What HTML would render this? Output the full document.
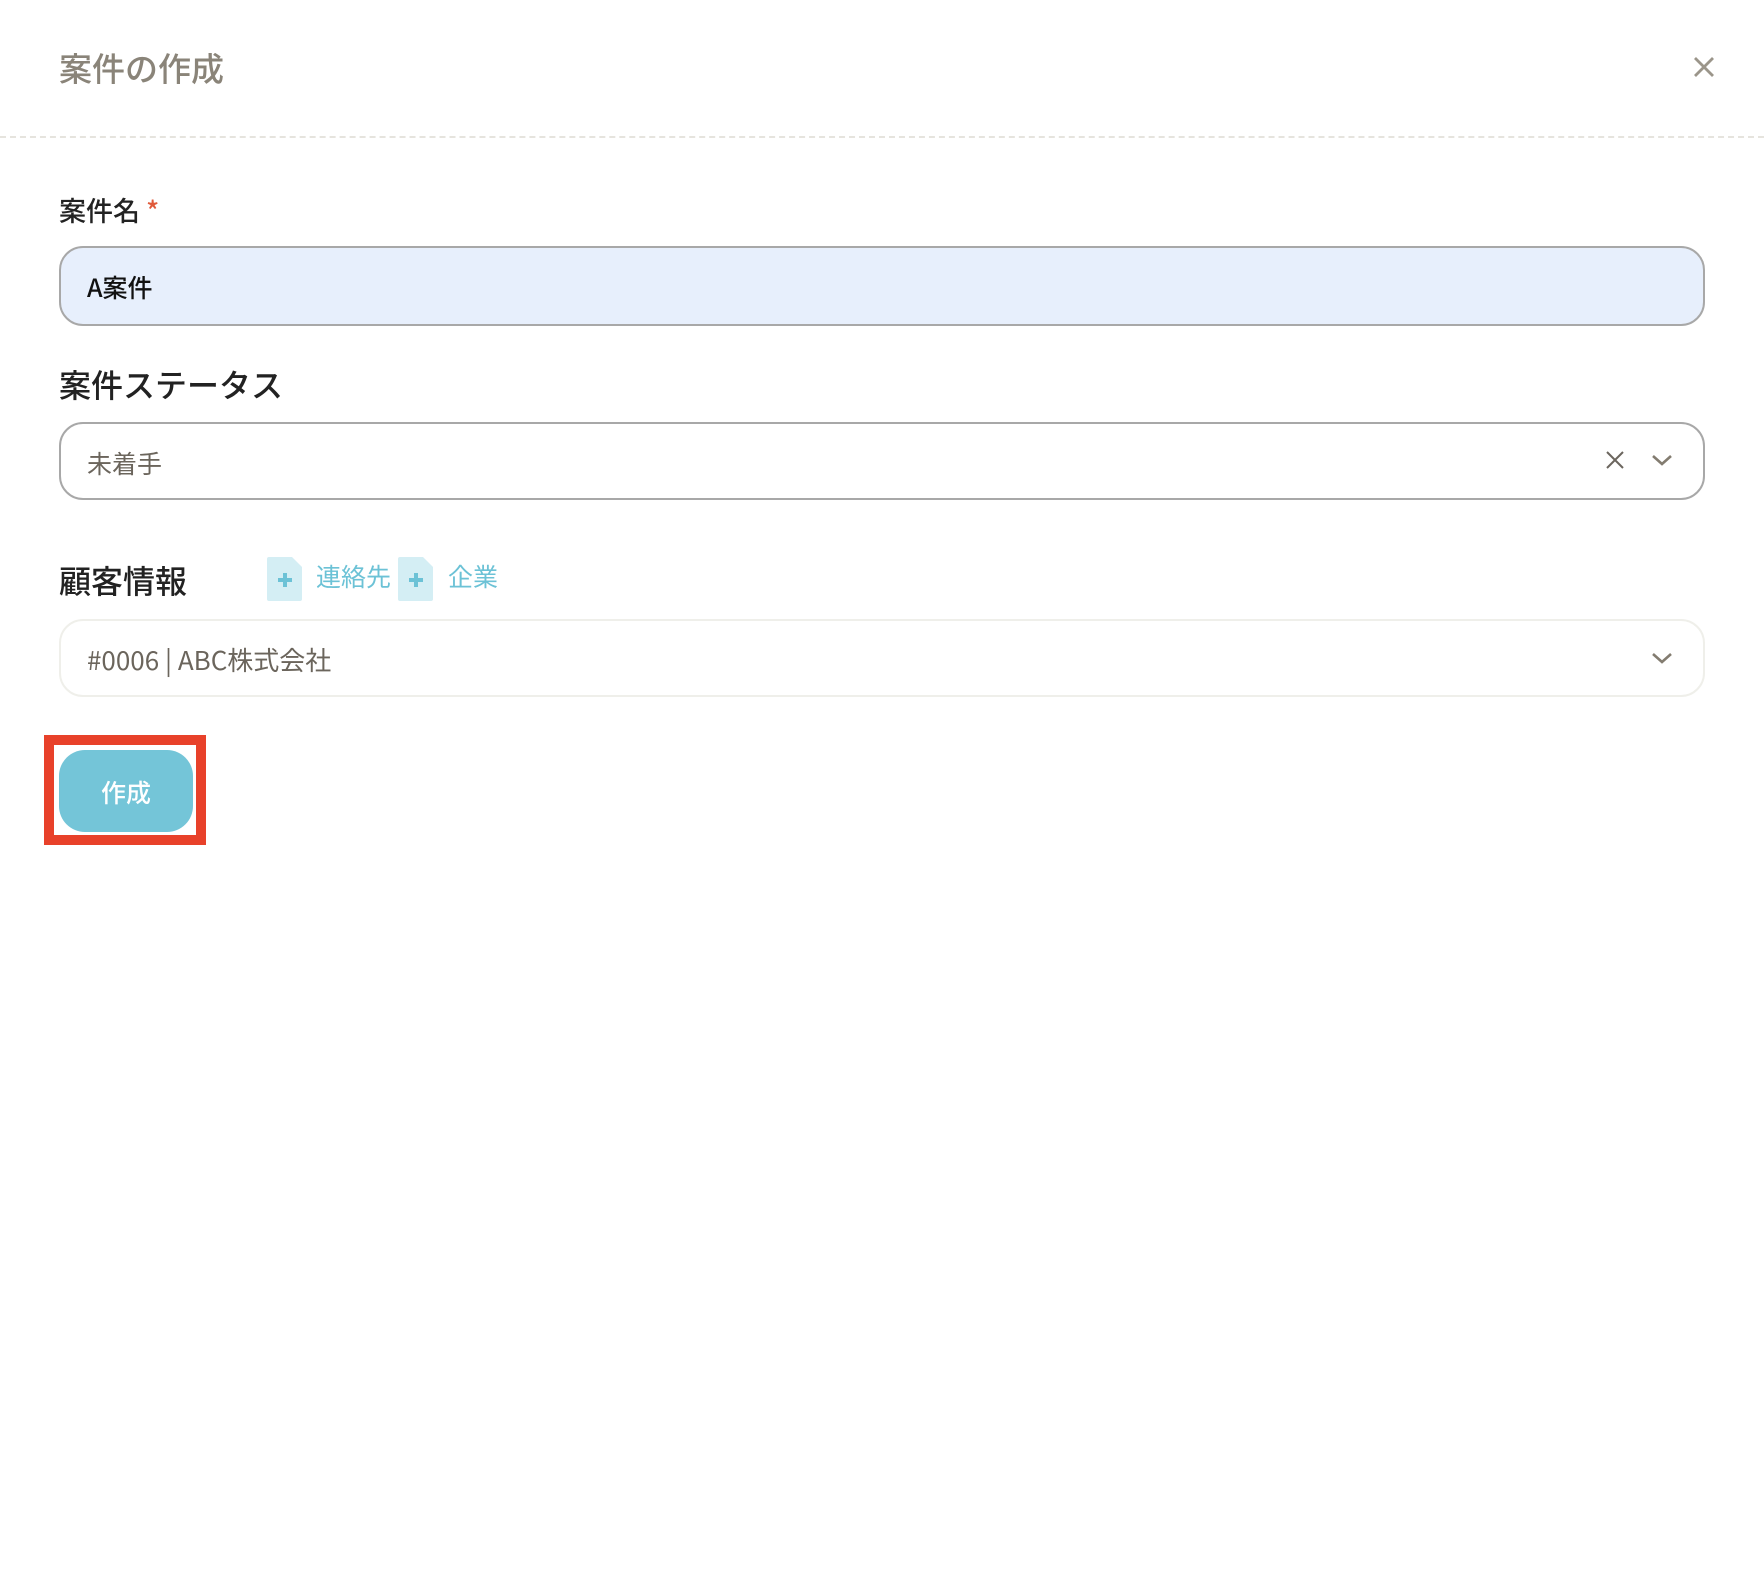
<!DOCTYPE html>
<html><head><meta charset="utf-8"><style>
*{margin:0;padding:0;box-sizing:border-box}
body{width:1764px;height:1592px;background:#fff;font-family:"Liberation Sans","Noto Sans CJK JP",sans-serif;position:relative;overflow:hidden}
.a{position:absolute;white-space:nowrap}
.title{left:59px;top:45px;font-size:33px;line-height:44px;color:#8a8479;font-family:"Noto Sans CJK JP",sans-serif;font-weight:500}
.dash{left:0;top:136px;width:1764px;border-top:2px dashed #e6e4de}
.lbl{font-family:"Noto Sans CJK JP",sans-serif;color:#222}
.box{position:absolute;left:59px;width:1646px;border-radius:24px}
.txt{font-family:"Noto Sans CJK JP",sans-serif}
</style></head><body>
<div class="a title">案件の作成</div>
<svg class="a" style="left:1693px;top:56px" width="22" height="22" viewBox="0 0 22 22"><path d="M2 2L20 20M20 2L2 20" stroke="#9b958a" stroke-width="2.8"/></svg>
<div class="a dash"></div>

<div class="a lbl" style="left:59px;top:192px;font-size:27px;line-height:36px;font-weight:500">案件名 <span style="color:#e05a3a">*</span></div>
<div class="box" style="top:246px;height:80px;background:#e7effc;border:2px solid #a8a8a8"></div>
<div class="a txt" style="left:87px;top:270px;font-size:25px;line-height:34px;color:#111;font-weight:500">A案件</div>

<div class="a lbl" style="left:59px;top:363px;font-size:32px;line-height:42px;font-weight:500">案件ステータス</div>
<div class="box" style="top:422px;height:78px;border:2px solid #a8a8a8"></div>
<div class="a txt" style="left:87px;top:446px;font-size:25px;line-height:34px;color:#6b655c">未着手</div>
<svg class="a" style="left:1606px;top:451px" width="18" height="18" viewBox="0 0 18 18"><path d="M1 1L17 17M17 1L1 17" stroke="#6b665e" stroke-width="2"/></svg>
<svg class="a" style="left:1651px;top:454px" width="22" height="13" viewBox="0 0 22 13"><path d="M2 2L11 10L20 2" stroke="#837c70" stroke-width="2.6" fill="none"/></svg>

<div class="a lbl" style="left:59px;top:559px;font-size:32px;line-height:42px;font-weight:500">顧客情報</div>
<svg class="a" style="left:267px;top:557px" width="36" height="44" viewBox="0 0 36 44"><path d="M2 0H25L35 10V42Q35 44 33 44H2Q0 44 0 42V2Q0 0 2 0Z" fill="#d4eef4"/><path d="M18 16V30M11 23H25" stroke="#6cc2d6" stroke-width="4"/></svg>
<div class="a txt" style="left:316px;top:559px;font-size:25px;line-height:34px;color:#6cc2d6">連絡先</div>
<svg class="a" style="left:398px;top:557px" width="36" height="44" viewBox="0 0 36 44"><path d="M2 0H25L35 10V42Q35 44 33 44H2Q0 44 0 42V2Q0 0 2 0Z" fill="#d4eef4"/><path d="M18 16V30M11 23H25" stroke="#6cc2d6" stroke-width="4"/></svg>
<div class="a txt" style="left:448px;top:559px;font-size:25px;line-height:34px;color:#6cc2d6">企業</div>

<div class="box" style="top:619px;height:78px;border:2px solid #efefea"></div>
<div class="a txt" style="left:87px;top:642px;font-size:26px;line-height:36px;color:#6b655c">#0006 | ABC株式会社</div>
<svg class="a" style="left:1651px;top:652px" width="22" height="13" viewBox="0 0 22 13"><path d="M2 2L11 10L20 2" stroke="#837c70" stroke-width="2.6" fill="none"/></svg>

<div class="a" style="left:44px;top:735px;width:162px;height:110px;border:10px solid #e8412a"></div>
<div class="a" style="left:59px;top:750px;width:134px;height:82px;background:#74c5d8;border-radius:26px"></div>
<div class="a txt" style="left:59px;top:775px;width:134px;text-align:center;font-size:25px;line-height:34px;color:#fff;font-weight:500">作成</div>
</body></html>
